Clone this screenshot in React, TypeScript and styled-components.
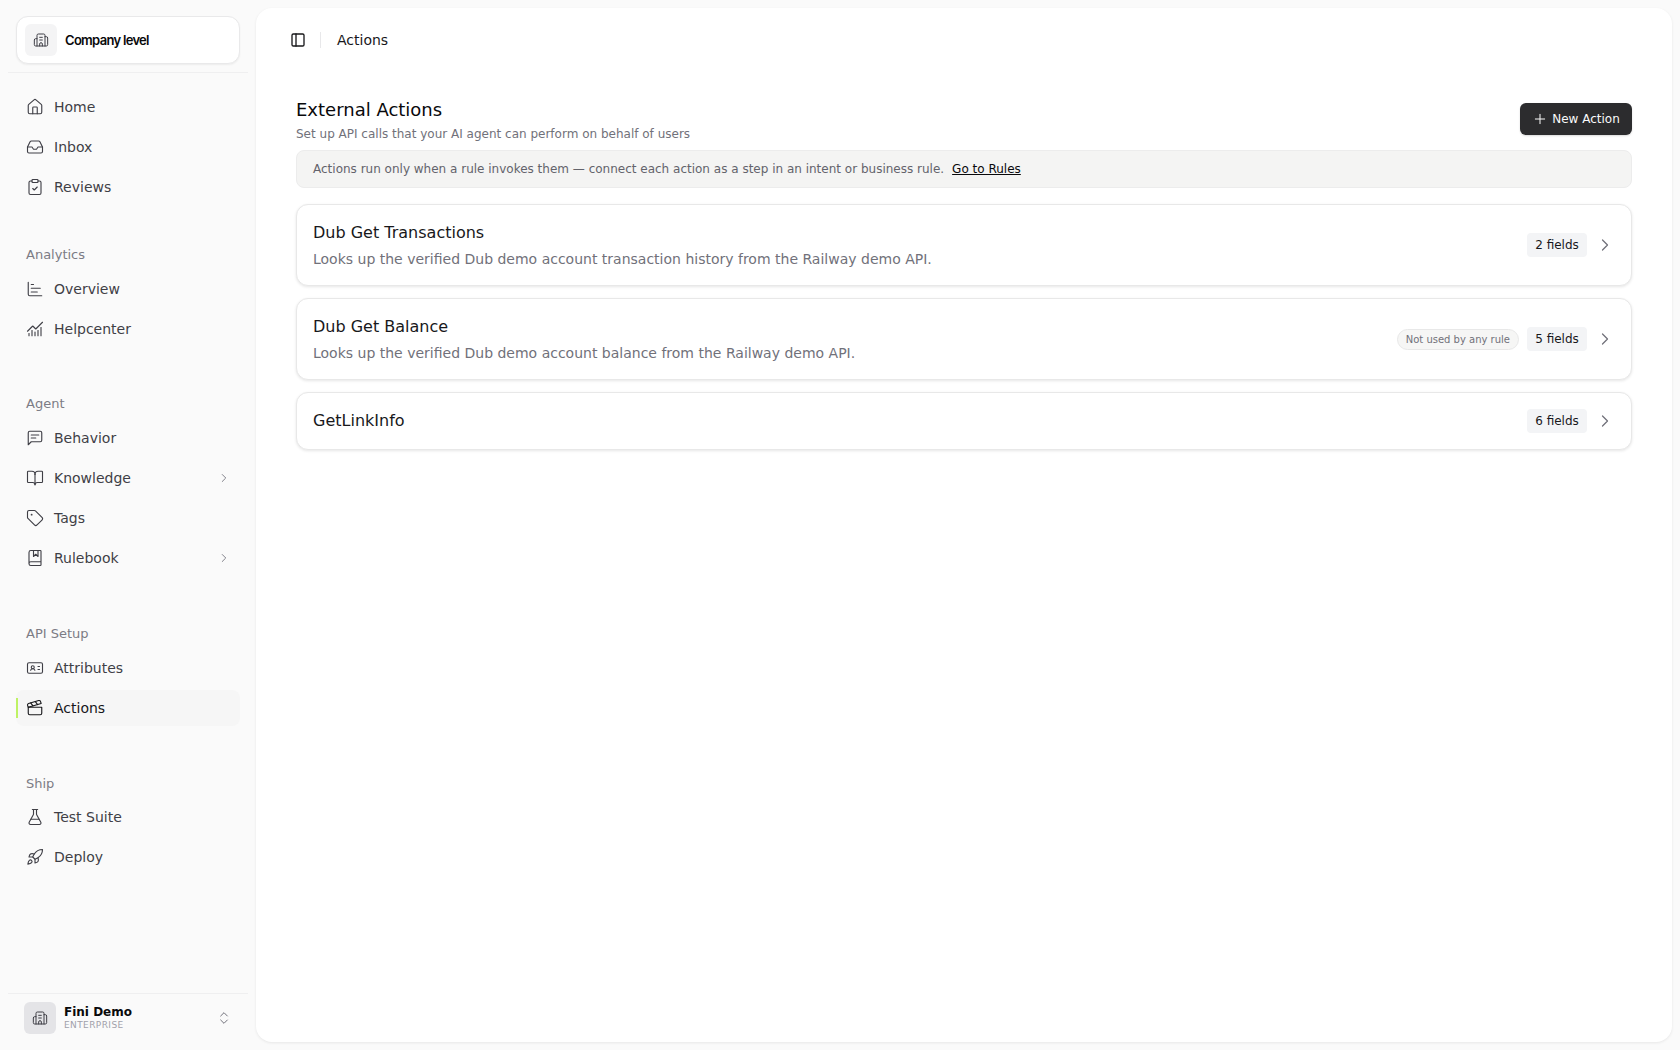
import React from "react";
import styled, { createGlobalStyle } from "styled-components";
import {
  ChartBar,
  Clapperboard,
  BookOpen,
  BookMarked,
  IdCard,
  FlaskConical,
  Rocket,
  House,
  Inbox,
  ClipboardCheck,
  Tag,
  ChevronRight,
  ChevronsUpDown,
  PanelLeft,
  Plus,
  ChartNoAxesCombined,
  Building2,
} from "lucide-react";

const Global = createGlobalStyle`
  html, body { margin: 0; padding: 0; height: 100%; background: #fafafa; }
  body { font-family: "DejaVu Sans", sans-serif; color: #18181b; }
  #root { height: 100%; }
  * { box-sizing: border-box; }
`;

const Shell = styled.div`
  display: flex;
  height: 1050px;
  width: 1680px;
  padding: 8px 8px 8px 0;
`;

const Sidebar = styled.aside`
  width: 256px;
  margin-top: -8px;
  margin-bottom: -8px;
  display: flex;
  flex-direction: column;
  padding: 0 8px;
  flex-shrink: 0;
`;

const CompanyCard = styled.div`
  margin: 16px 8px 0;
  height: 48px;
  background: #fff;
  border: 1px solid #e9e9ea;
  border-radius: 12px;
  box-shadow: 0 1px 2px rgba(0, 0, 0, 0.06);
  display: flex;
  align-items: center;
  padding: 0 8px;
  gap: 8px;
`;

const IconTile = styled.div<{ $bg: string }>`
  width: 32px;
  height: 32px;
  border-radius: 6px;
  background: ${(p) => p.$bg};
  display: flex;
  align-items: center;
  justify-content: center;
  color: #3f3f46;
  flex-shrink: 0;
`;

const CompanyName = styled.span`
  font-family: Inter, sans-serif;
  font-size: 13px;
  font-weight: 600;
  letter-spacing: -0.7px;
  color: #09090b;
`;

const Divider = styled.div`
  height: 1px;
  background: #efeff0;
  margin-top: 8px;
  flex-shrink: 0;
`;

const NavScroll = styled.nav`
  flex: 1;
  display: flex;
  flex-direction: column;
  padding: 16px 8px 0;
`;

const Group = styled.div<{ $mt: number }>`
  margin-top: ${(p) => p.$mt}px;
  display: flex;
  flex-direction: column;
`;

const GroupLabel = styled.div<{ $gap: number }>`
  height: 22px;
  line-height: 22px;
  margin-bottom: ${(p) => p.$gap}px;
  padding-left: 10px;
  font-size: 13px;
  color: #7c7c85;
`;

const NavItem = styled.div<{ $active?: boolean }>`
  position: relative;
  height: 36px;
  margin-bottom: 4px;
  display: flex;
  align-items: center;
  padding-left: 10px;
  gap: 10px;
  font-size: 14px;
  border-radius: 8px;
  color: ${(p) => (p.$active ? "#18181b" : "#3f3f46")};
  background: ${(p) => (p.$active ? "#f6f6f6" : "transparent")};
  svg { flex-shrink: 0; }
`;

const ActiveBar = styled.span`
  position: absolute;
  left: 0;
  top: 8px;
  bottom: 8px;
  width: 2px;
  background: #bef264;
`;

const NavChevron = styled.span`
  margin-left: auto;
  margin-right: 9px;
  display: flex;
  color: #71717a;
`;

const Footer = styled.div`
  border-top: 1px solid #efeff0;
  height: 57px;
  display: flex;
  align-items: center;
  padding: 0 16px 8px;
  gap: 8px;
`;

const FooterText = styled.div`
  display: flex;
  flex-direction: column;
  flex: 1;
`;

const FooterName = styled.div`
  font-size: 12px;
  font-weight: 700;
  line-height: 15px;
  color: #09090b;
`;

const FooterPlan = styled.div`
  font-size: 9px;
  line-height: 11px;
  letter-spacing: 0.4px;
  color: #a1a1aa;
`;

const FooterToggle = styled.span`
  display: flex;
  color: #71717a;
`;

const Main = styled.main`
  flex: 1;
  background: #fff;
  border-radius: 16px;
  box-shadow: 0 1px 3px rgba(0, 0, 0, 0.08);
  display: flex;
  flex-direction: column;
`;

const TopBar = styled.header`
  height: 64px;
  display: flex;
  align-items: center;
  padding: 0 0 0 34px;
  flex-shrink: 0;
`;

const TopSeparator = styled.div`
  width: 1px;
  height: 16px;
  background: #e8e8ea;
  margin: 0 16px 0 14px;
`;

const Crumb = styled.span`
  font-size: 14px;
  color: #18181b;
`;

const Content = styled.div`
  padding: 23px 40px 0;
  display: flex;
  flex-direction: column;
`;

const HeadRow = styled.div`
  display: flex;
  justify-content: space-between;
  align-items: center;
  height: 47px;
`;

const HeadText = styled.div`
  margin-top: 2px;
`;

const Title = styled.h1`
  margin: 0 0 2px;
  font-size: 18px;
  font-weight: 400;
  line-height: 26px;
  color: #09090b;
`;

const Subtitle = styled.p`
  margin: 0;
  font-size: 12px;
  line-height: 18px;
  color: #71717a;
`;

const PrimaryButton = styled.button`
  height: 32px;
  width: 112px;
  border: 0;
  border-radius: 6px;
  background: #2c2c2e;
  color: #fafafa;
  font-family: inherit;
  font-size: 12px;
  display: flex;
  align-items: center;
  justify-content: center;
  gap: 4px;
  box-shadow: 0 1px 2px rgba(0, 0, 0, 0.15);
`;

const Banner = styled.div`
  margin-top: 8px;
  height: 38px;
  background: #f4f4f3;
  border: 1px solid #ececec;
  border-radius: 8px;
  display: flex;
  align-items: center;
  padding: 0 16px;
  font-size: 12px;
  color: #63636b;
`;

const BannerLink = styled.a`
  margin-left: 8px;
  color: #09090b;
  text-decoration: underline;
`;

const CardList = styled.div`
  margin-top: 16px;
  display: flex;
  flex-direction: column;
  gap: 12px;
`;

const Card = styled.div`
  background: #fff;
  border: 1px solid #e8e8e8;
  border-radius: 12px;
  box-shadow: 0 1px 3px rgba(0, 0, 0, 0.1);
  padding: 14px 16px;
  display: flex;
  align-items: center;
  justify-content: space-between;
`;

const CardBody = styled.div`
  display: flex;
  flex-direction: column;
`;

const CardTitle = styled.div`
  font-size: 16px;
  line-height: 28px;
  color: #18181b;
`;

const CardDesc = styled.div`
  font-size: 14px;
  line-height: 24px;
  color: #71717a;
`;

const CardMeta = styled.div`
  display: flex;
  align-items: center;
  gap: 8px;
  color: #71717a;
`;

const UnusedPill = styled.span`
  height: 21px;
  display: inline-flex;
  align-items: center;
  padding: 0 8px;
  border: 1px solid #e8e8e8;
  background: #f6f6f5;
  border-radius: 999px;
  font-size: 10px;
  color: #71717a;
`;

const FieldBadge = styled.span`
  height: 24px;
  width: 60px;
  display: inline-flex;
  align-items: center;
  justify-content: center;
  background: #f3f4f6;
  border-radius: 4px;
  font-size: 12px;
  color: #18181b;
`;

const BehaviorIcon = () => (
  <svg width="18" height="18" viewBox="0 0 24 24" fill="none" stroke="currentColor" strokeWidth="1.5" strokeLinecap="round" strokeLinejoin="round">
    <path d="M21 15a2 2 0 0 1-2 2H7l-4 4V5a2 2 0 0 1 2-2h14a2 2 0 0 1 2 2z" />
    <path d="M7 8h10" />
    <path d="M7 12h6" />
  </svg>
);

type Item = { label: string; icon: React.ReactNode; chevron?: boolean; active?: boolean };

const ic = { size: 18, strokeWidth: 1.5 } as const;

const groups: { label?: string; mt: number; gap?: number; items: Item[] }[] = [
  {
    mt: 0,
    items: [
      { label: "Home", icon: <House {...ic} /> },
      { label: "Inbox", icon: <Inbox {...ic} /> },
      { label: "Reviews", icon: <ClipboardCheck {...ic} /> },
    ],
  },
  {
    label: "Analytics",
    mt: 35,
    gap: 5,
    items: [
      { label: "Overview", icon: <ChartBar {...ic} /> },
      { label: "Helpcenter", icon: <ChartNoAxesCombined {...ic} /> },
    ],
  },
  {
    label: "Agent",
    mt: 42,
    gap: 5,
    items: [
      { label: "Behavior", icon: <BehaviorIcon /> },
      { label: "Knowledge", icon: <BookOpen {...ic} />, chevron: true },
      { label: "Tags", icon: <Tag {...ic} /> },
      { label: "Rulebook", icon: <BookMarked {...ic} />, chevron: true },
    ],
  },
  {
    label: "API Setup",
    mt: 43,
    gap: 5,
    items: [
      { label: "Attributes", icon: <IdCard {...ic} /> },
      { label: "Actions", icon: <Clapperboard {...ic} />, active: true },
    ],
  },
  {
    label: "Ship",
    mt: 43,
    gap: 4,
    items: [
      { label: "Test Suite", icon: <FlaskConical {...ic} /> },
      { label: "Deploy", icon: <Rocket {...ic} /> },
    ],
  },
];

const actions = [
  { title: "Dub Get Transactions", desc: "Looks up the verified Dub demo account transaction history from the Railway demo API.", fields: "2 fields" },
  { title: "Dub Get Balance", desc: "Looks up the verified Dub demo account balance from the Railway demo API.", fields: "5 fields", unused: true },
  { title: "GetLinkInfo", fields: "6 fields" },
];

export default function App() {
  return (
    <>
      <Global />
      <Shell>
        <Sidebar>
          <CompanyCard>
            <IconTile $bg="#f4f4f5">
              <Building2 size={16} strokeWidth={1.5} />
            </IconTile>
            <CompanyName>Company level</CompanyName>
          </CompanyCard>
          <Divider />
          <NavScroll>
            {groups.map((g, i) => (
              <Group key={i} $mt={g.mt}>
                {g.label && <GroupLabel $gap={g.gap ?? 5}>{g.label}</GroupLabel>}
                {g.items.map((it) => (
                  <NavItem key={it.label} $active={it.active}>
                    {it.active && <ActiveBar />}
                    {it.icon}
                    {it.label}
                    {it.chevron && (
                      <NavChevron>
                        <ChevronRight size={14} strokeWidth={1.5} />
                      </NavChevron>
                    )}
                  </NavItem>
                ))}
              </Group>
            ))}
          </NavScroll>
          <Footer>
            <IconTile $bg="#e4e4e7">
              <Building2 size={16} strokeWidth={1.5} />
            </IconTile>
            <FooterText>
              <FooterName>Fini Demo</FooterName>
              <FooterPlan>ENTERPRISE</FooterPlan>
            </FooterText>
            <FooterToggle>
              <ChevronsUpDown size={16} strokeWidth={1.5} />
            </FooterToggle>
          </Footer>
        </Sidebar>
        <Main>
          <TopBar>
            <PanelLeft size={16} strokeWidth={2} />
            <TopSeparator />
            <Crumb>Actions</Crumb>
          </TopBar>
          <Content>
            <HeadRow>
              <HeadText>
                <Title>External Actions</Title>
                <Subtitle>Set up API calls that your AI agent can perform on behalf of users</Subtitle>
              </HeadText>
              <PrimaryButton>
                <Plus size={16} strokeWidth={1.5} />
                New Action
              </PrimaryButton>
            </HeadRow>
            <Banner>
              Actions run only when a rule invokes them — connect each action as a step in an intent or business rule.
              <BannerLink>Go to Rules</BannerLink>
            </Banner>
            <CardList>
              {actions.map((a) => (
                <Card key={a.title}>
                  <CardBody>
                    <CardTitle>{a.title}</CardTitle>
                    {a.desc && <CardDesc>{a.desc}</CardDesc>}
                  </CardBody>
                  <CardMeta>
                    {a.unused && <UnusedPill>Not used by any rule</UnusedPill>}
                    <FieldBadge>{a.fields}</FieldBadge>
                    <ChevronRight size={20} strokeWidth={1.5} />
                  </CardMeta>
                </Card>
              ))}
            </CardList>
          </Content>
        </Main>
      </Shell>
    </>
  );
}
